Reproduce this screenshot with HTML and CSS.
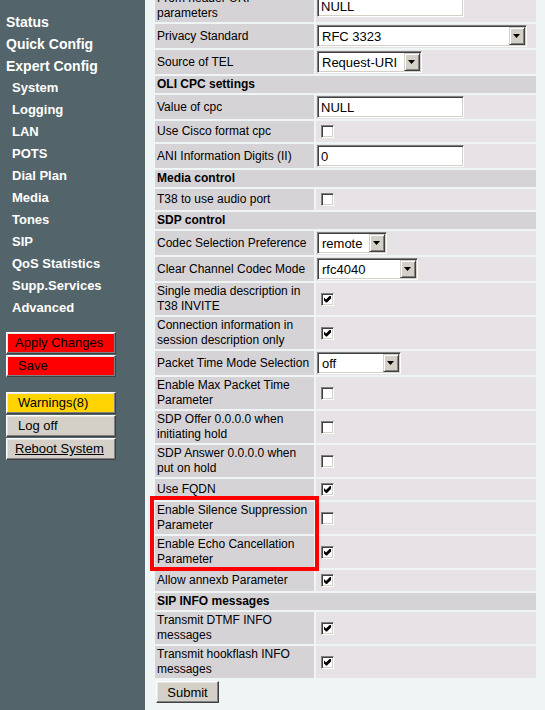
FILE: index.html
```html
<!DOCTYPE html>
<html lang="en">
<head>
    <meta charset="UTF-8">
    <meta name="viewport" content="width=device-width, initial-scale=1.0">
    <title>Expert Config - SIP</title>
    <link rel="stylesheet" href="styles.css">
</head>
<body>
    <div id="wrap">
        <!-- left menu frame -->
        <div id="nav">
            <ul class="menu">
                <li class="top"><a href="#">Status</a></li>
                <li class="top"><a href="#">Quick Config</a></li>
                <li class="top"><a href="#">Expert Config</a></li>
                <li><a href="#">System</a></li>
                <li><a href="#">Logging</a></li>
                <li><a href="#">LAN</a></li>
                <li><a href="#">POTS</a></li>
                <li><a href="#">Dial Plan</a></li>
                <li><a href="#">Media</a></li>
                <li><a href="#">Tones</a></li>
                <li><a href="#">SIP</a></li>
                <li><a href="#">QoS Statistics</a></li>
                <li><a href="#">Supp.Services</a></li>
                <li><a href="#">Advanced</a></li>
            </ul>
            <div class="actions">
                <button class="btn btn-red">Apply Changes</button>
                <button class="btn btn-red ind">Save</button>
            </div>
            <div class="actions">
                <button class="btn btn-yellow ind">Warnings(8)</button>
                <button class="btn ind">Log off</button>
                <a href="#" class="btn link">Reboot System</a>
            </div>
        </div>

        <!-- right content frame (scrolled down a bit) -->
        <div id="main">
            <form class="page" action="">
                <table class="cfg">
                    <tr>
                        <td class="lbl">From header URI parameters</td>
                        <td class="val"><input class="txt" type="text" value="NULL"></td>
                    </tr>
                    <tr>
                        <td class="lbl">Privacy Standard</td>
                        <td class="val">
                            <span class="sel sel-privacy"><select><option>RFC 3323</option><option>RFC 3325</option></select><span class="arr"></span></span>
                        </td>
                    </tr>
                    <tr>
                        <td class="lbl">Source of TEL</td>
                        <td class="val">
                            <span class="sel sel-uri"><select><option>Request-URI</option><option>To</option></select><span class="arr"></span></span>
                        </td>
                    </tr>
                    <tr><th colspan="2">OLI CPC settings</th></tr>
                    <tr>
                        <td class="lbl">Value of cpc</td>
                        <td class="val"><input class="txt" type="text" value="NULL"></td>
                    </tr>
                    <tr>
                        <td class="lbl">Use Cisco format cpc</td>
                        <td class="val"><input class="cb" type="checkbox"></td>
                    </tr>
                    <tr>
                        <td class="lbl">ANI Information Digits (II)</td>
                        <td class="val"><input class="txt" type="text" value="0"></td>
                    </tr>
                    <tr><th colspan="2">Media control</th></tr>
                    <tr>
                        <td class="lbl">T38 to use audio port</td>
                        <td class="val"><input class="cb" type="checkbox"></td>
                    </tr>
                    <tr><th colspan="2">SDP control</th></tr>
                    <tr>
                        <td class="lbl">Codec Selection Preference</td>
                        <td class="val">
                            <span class="sel sel-codec"><select><option>remote</option><option>local</option></select><span class="arr"></span></span>
                        </td>
                    </tr>
                    <tr>
                        <td class="lbl">Clear Channel Codec Mode</td>
                        <td class="val">
                            <span class="sel sel-clear"><select><option>rfc4040</option><option>none</option></select><span class="arr"></span></span>
                        </td>
                    </tr>
                    <tr>
                        <td class="lbl">Single media description in T38 INVITE</td>
                        <td class="val"><input class="cb" type="checkbox" checked></td>
                    </tr>
                    <tr>
                        <td class="lbl">Connection information in session description only</td>
                        <td class="val"><input class="cb" type="checkbox" checked></td>
                    </tr>
                    <tr>
                        <td class="lbl">Packet Time Mode Selection</td>
                        <td class="val">
                            <span class="sel sel-ptime"><select><option>off</option><option>on</option></select><span class="arr"></span></span>
                        </td>
                    </tr>
                    <tr>
                        <td class="lbl">Enable Max Packet Time Parameter</td>
                        <td class="val"><input class="cb" type="checkbox"></td>
                    </tr>
                    <tr>
                        <td class="lbl">SDP Offer 0.0.0.0 when initiating hold</td>
                        <td class="val"><input class="cb" type="checkbox"></td>
                    </tr>
                    <tr>
                        <td class="lbl">SDP Answer 0.0.0.0 when put on hold</td>
                        <td class="val"><input class="cb" type="checkbox"></td>
                    </tr>
                    <tr>
                        <td class="lbl">Use FQDN</td>
                        <td class="val"><input class="cb" type="checkbox" checked></td>
                    </tr>
                    <tr>
                        <td class="lbl">Enable Silence Suppression Parameter</td>
                        <td class="val"><input class="cb" type="checkbox"></td>
                    </tr>
                    <tr>
                        <td class="lbl">Enable Echo Cancellation Parameter</td>
                        <td class="val"><input class="cb" type="checkbox" checked></td>
                    </tr>
                    <tr>
                        <td class="lbl">Allow annexb Parameter</td>
                        <td class="val"><input class="cb" type="checkbox" checked></td>
                    </tr>
                    <tr><th colspan="2">SIP INFO messages</th></tr>
                    <tr>
                        <td class="lbl">Transmit DTMF INFO messages</td>
                        <td class="val"><input class="cb" type="checkbox" checked></td>
                    </tr>
                    <tr>
                        <td class="lbl">Transmit hookflash INFO messages</td>
                        <td class="val"><input class="cb" type="checkbox" checked></td>
                    </tr>
                </table>
                <input class="submit" type="submit" value="Submit">
            </form>
            <!-- highlight box -->
            <div class="mark"></div>
        </div>
    </div>
</body>
</html>
```

FILE: styles.css
```css
* {
    margin: 0;
    padding: 0;
    box-sizing: border-box;
}
a {
    text-decoration: none;
    color: inherit;
}
li {
    list-style: none;
}
body {
    background: #eef5f4;
    font-family: "Liberation Sans", Arial, sans-serif;
    overflow: hidden;
}
#wrap {
    display: flex;
    height: 710px;
}

/* left menu */
#nav {
    width: 145px;
    flex-shrink: 0;
    background: #53656a;
    padding-top: 11px;
}
.menu li {
    height: 22px;
    line-height: 22px;
    padding-left: 12px;
    font-size: 13px;
    font-weight: bold;
    color: #fff;
}
.menu li.top {
    padding-left: 6px;
    font-size: 14px;
}
.actions {
    display: flex;
    flex-direction: column;
    gap: 1px;
    padding-left: 6px;
    margin-top: 13px;
}
.actions + .actions {
    margin-top: 15px;
}
.btn {
    display: block;
    width: 110px;
    height: 22px;
    padding-left: 8px;
    text-align: left;
    font: 13px "Liberation Sans", Arial, sans-serif;
    line-height: 20px;
    color: #000;
    background: #d4d0c8;
    border: 1px solid;
    border-color: #fff #404040 #404040 #fff;
    box-shadow: inset -1px -1px #808080, inset 1px 1px #e8e6e2;
    cursor: pointer;
}
.btn.ind {
    padding-left: 11px;
}
.btn.link {
    text-decoration: underline;
}
.btn-red {
    background: #ff0000;
}
.btn-yellow {
    background: #ffd400;
}

/* right content */
#main {
    flex: 1;
    position: relative;
    overflow: hidden;
}
.page {
    margin-top: -12px;
    padding: 0 7px 0 8px;
}
.cfg {
    width: 385px;
    table-layout: fixed;
    border-spacing: 2px;
    font-size: 12px;
    line-height: 15px;
    color: #000;
}
.cfg th {
    text-align: left;
    font-weight: bold;
    background: #d6d3d7;
    padding: 1px 2px;
}
.cfg td {
    padding: 1px;
    vertical-align: middle;
}
.cfg td.lbl {
    width: 159px;
    padding: 1px 2px;
    background: #d6d3d7;
}
.cfg td.val {
    width: 220px;
    background: #e6e2e6;
}

/* sunken fields */
.txt,
.sel select {
    display: block;
    height: 22px;
    font: 13px "Liberation Sans", Arial, sans-serif;
    color: #000;
    background: #fff;
    border: 1px solid;
    border-color: #808080 #fff #fff #808080;
    box-shadow: inset 1px 1px #404040, inset -1px -1px #d4d0c8;
    border-radius: 0;
    outline: 0;
}
.txt {
    width: 147px;
    padding: 0 3px;
}
.sel {
    position: relative;
    display: block;
}
.sel select {
    width: 100%;
    -webkit-appearance: none;
    appearance: none;
    padding: 0 18px 0 4px;
}
.sel .arr {
    position: absolute;
    top: 2px;
    right: 2px;
    width: 16px;
    height: 18px;
    background: #d4d0c8;
    border: 1px solid;
    border-color: #d4d0c8 #404040 #404040 #d4d0c8;
    box-shadow: inset 1px 1px #fff, inset -1px -1px #808080;
    pointer-events: none;
}
.sel .arr::after {
    content: "";
    position: absolute;
    left: 3px;
    top: 6px;
    width: 7px;
    height: 4px;
    background: #000;
    clip-path: polygon(0 0, 100% 0, 50% 100%);
}
.sel-privacy { width: 210px; }
.sel-uri { width: 105px; }
.sel-codec { width: 70px; }
.sel-clear { width: 101px; }
.sel-ptime { width: 84px; }

.cb {
    display: block;
    position: relative;
    width: 13px;
    height: 13px;
    margin: 3px 4px;
    -webkit-appearance: none;
    appearance: none;
    background: #fff;
    border: 1px solid;
    border-color: #808080 #fff #fff #808080;
    box-shadow: inset 1px 1px #404040, inset -1px -1px #d4d0c8;
}
.cb:checked::after {
    content: "";
    position: absolute;
    left: 2px;
    top: 2px;
    width: 7px;
    height: 7px;
    background: #000;
    clip-path: polygon(0 2px, 2px 4px, 6px 0, 7px 0, 7px 3px, 3px 7px, 2px 7px, 0 5px);
}

.submit {
    display: block;
    margin: 1px 0 0 3px;
    width: 63px;
    height: 22px;
    font: 13px "Liberation Sans", Arial, sans-serif;
    color: #000;
    background: #d4d0c8;
    border: 1px solid;
    border-color: #fff #404040 #404040 #fff;
    box-shadow: inset -1px -1px #808080, inset 1px 1px #e8e6e2;
    cursor: pointer;
}

.mark {
    position: absolute;
    left: 5px;
    top: 496px;
    width: 169px;
    height: 75px;
    border: 4px solid #ff0000;
}
```
